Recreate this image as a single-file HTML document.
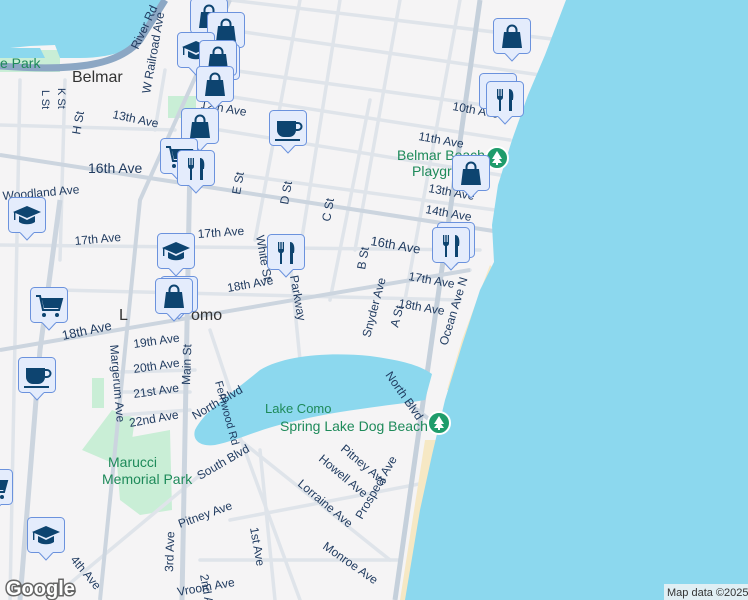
<!DOCTYPE html>
<html><head><meta charset="utf-8"><style>
html,body{margin:0;padding:0}
body{width:748px;height:600px;overflow:hidden;background:#f5f4f5;font-family:"Liberation Sans",sans-serif}
svg{display:block}
.l{font-size:12px;fill:#1f3a5f}
.g{font-size:14px;fill:#1e8a5a}
</style></head><body>
<svg width="748" height="600" viewBox="0 0 748 600" xmlns="http://www.w3.org/2000/svg">
<defs>
<g id="box"><rect x="0.5" y="0.5" width="37" height="35" rx="4" fill="#e4ecfc" stroke="#6b92dd"/><path d="M12 35.5 L19 43 L26 35.5" fill="#e4ecfc" stroke="#6b92dd"/><rect x="12.5" y="33" width="13" height="3" fill="#e4ecfc"/></g>
<g id="bag"><use href="#box"/><path d="M11 14 h16 l2 16 h-20z" fill="#0d4470"/><path d="M14.5 15 v-3 a4.5 4.5 0 0 1 9 0 v3" fill="none" stroke="#0d4470" stroke-width="2"/></g>
<g id="fork"><use href="#box"/><path d="M11 8 v8 a3 3 0 0 0 2 3 v11 h2 v-11 a3 3 0 0 0 2-3 v-8 h-1.3 v7 h-1 v-7 h-1.4 v7 h-1 v-7z" fill="#0d4470"/><path d="M23 8 c4 0 5 5 4 11 h-1 v11 h-3z" fill="#0d4470"/></g>
<g id="cap"><use href="#box"/><path d="M5 15 L19 9 L33 15 L19 21z" fill="#0d4470"/><path d="M11 19 v6 c4 3 12 3 16 0 v-6 l-8 4z" fill="#0d4470"/><rect x="6" y="15" width="1.4" height="8" fill="#0d4470"/></g>
<g id="cart"><use href="#box"/><path d="M6 9 h4 l3 14 h16 l3-11 h-21" fill="none" stroke="#0d4470" stroke-width="2"/><path d="M12 13 h19 l-2 8 h-15z" fill="#0d4470"/><circle cx="14" cy="28" r="2" fill="#0d4470"/><circle cx="27" cy="28" r="2" fill="#0d4470"/></g>
<g id="cup"><use href="#box"/><path d="M8 11 h19 v9 a7 7 0 0 1 -7 7 h-5 a7 7 0 0 1 -7 -7z" fill="#0d4470"/><path d="M27 13 h2 a3 3 0 0 1 0 7 h-2" fill="none" stroke="#0d4470" stroke-width="2"/><rect x="6" y="29" width="25" height="2" fill="#0d4470"/></g>
<g id="tree"><circle cx="0" cy="0" r="11" fill="#1f9c6b" stroke="#fff" stroke-width="2"/><path d="M0 -7 L-5 1 h3 l-3 4 h10 l-3-4 h3z" fill="#fff"/><rect x="-1" y="4" width="2" height="3" fill="#fff"/></g>
</defs>
<rect x="0" y="50" width="60" height="22" fill="#c9eed6"/>
<rect x="168" y="96" width="28" height="22" fill="#c9eed6"/>
<path d="M112 410 L135 418 L130 455 L110 462 L82 450 Z" fill="#c9eed6"/>
<path d="M115 440 L170 430 L172 510 L140 515 L120 500Z" fill="#c9eed6"/>
<rect x="92" y="378" width="12" height="30" fill="#c9eed6"/>
<g stroke="#dfe4ea" stroke-width="3.5" fill="none" stroke-linecap="round">
<path d="M0 155 L500 232"/><path d="M0 245 L480 250"/><path d="M0 350 L470 270"/>
<path d="M230 0 L560 40"/><path d="M230 30 L540 75"/><path d="M230 70 L520 110"/><path d="M220 95 L510 140"/><path d="M220 130 L500 175"/><path d="M240 175 L495 210"/>
<path d="M0 125 L175 130"/><path d="M60 290 L460 300"/><path d="M120 372 L195 370"/><path d="M120 392 L190 392"/><path d="M120 415 L190 410"/>
<path d="M300 0 L255 240"/><path d="M340 0 L300 250"/><path d="M400 0 L355 250"/><path d="M460 0 L405 300"/><path d="M370 100 L330 300"/>
<path d="M20 80 L10 600"/><path d="M65 80 L60 260"/><path d="M165 70 L155 130"/>
<path d="M230 410 L300 600"/><path d="M240 440 L390 560"/><path d="M230 520 L440 480"/><path d="M260 450 L275 600"/><path d="M200 560 L400 560"/>
<path d="M210 330 L240 420"/><path d="M290 260 L300 360"/><path d="M200 475 L50 600"/>
</g>
<g stroke="#ccd5df" stroke-width="4" fill="none">
<path d="M0 155 L500 232"/><path d="M480 0 L395 600" stroke="#c5d0db" stroke-width="5"/>
<path d="M190 160 L182 600" stroke-width="5"/><path d="M230 0 L140 200 L100 600"/>
<path d="M60 200 L40 350 L20 600" stroke-width="5"/>
<path d="M360 365 L430 420"/><path d="M0 350 L470 270"/>
</g>
<path d="M0 0 H165 L150 30 C140 50 110 58 80 58 L60 58 L55 45 L30 46 L10 48 L0 48Z" fill="#8cd8ee"/>
<path d="M0 48 H40 L45 58 H0Z" fill="#8cd8ee"/>
<path d="M490 265 L462 340 L447 390 L455 390 L470 340 L493 268Z" fill="#f6e8c4"/>
<path d="M425 440 L400 600 L420 600 L440 440Z" fill="#f6e8c4"/>
<path d="M566 0 L748 0 L748 600 L405 600 L420 510 L432 455 L445 400 L462 345 L480 290 L494 262 L492 225 L498 185 L512 140 L528 95 L545 55Z" fill="#8cd8ee"/>
<path d="M195 430 C205 410 230 395 260 370 C285 355 330 352 370 356 C400 360 420 365 432 374 L425 400 C395 405 340 410 300 420 C260 428 240 440 215 445 C200 447 192 440 195 430Z" fill="#8cd8ee"/>
<path d="M0 66 C80 72 120 64 140 40 L165 0" stroke="#8ca7c4" stroke-width="7" fill="none"/>
<g class="l">
<text x="72" y="82" font-size="16" fill="#333">Belmar</text>
<text x="88" y="173" font-size="14">16th Ave</text>
<text x="112" y="118" transform="rotate(12 112 118)">13th Ave</text>
<text x="200" y="108" transform="rotate(10 200 108)">12th Ave</text>
<text x="370" y="245" font-size="13" transform="rotate(10 370 245)">16th Ave</text>
<text x="198" y="238" transform="rotate(-4 198 238)">17th Ave</text>
<text x="75" y="245" transform="rotate(-5 75 245)">17th Ave</text>
<text x="408" y="280" transform="rotate(10 408 280)">17th Ave</text>
<text x="398" y="307" transform="rotate(10 398 307)">18th Ave</text>
<text x="228" y="292" transform="rotate(-10 228 292)">18th Ave</text>
<text x="63" y="340" font-size="13" transform="rotate(-12 63 340)">18th Ave</text>
<text x="134" y="348" transform="rotate(-8 134 348)">19th Ave</text>
<text x="134" y="373" transform="rotate(-8 134 373)">20th Ave</text>
<text x="134" y="398" transform="rotate(-8 134 398)">21st Ave</text>
<text x="130" y="427" transform="rotate(-10 130 427)">22nd Ave</text>
<text x="418" y="140" transform="rotate(10 418 140)">11th Ave</text>
<text x="452" y="110" transform="rotate(10 452 110)">10th Ave</text>
<text x="428" y="192" transform="rotate(10 428 192)">13th Ave</text>
<text x="425" y="213" transform="rotate(10 425 213)">14th Ave</text>
<text x="447" y="346" transform="rotate(-73 447 346)">Ocean Ave N</text>
<text x="385" y="375" transform="rotate(55 385 375)">North Blvd</text>
<text x="195" y="420" transform="rotate(-30 195 420)">North Blvd</text>
<text x="200" y="480" transform="rotate(-30 200 480)">South Blvd</text>
<text x="190" y="385" transform="rotate(-88 190 385)">Main St</text>
<text x="215" y="382" transform="rotate(75 215 382)" font-size="11">Fernwood Rd</text>
<text x="150" y="94" transform="rotate(-80 150 94)">W Railroad Ave</text>
<text x="290" y="276" transform="rotate(80 290 276)">Parkway</text>
<text x="256" y="236" transform="rotate(80 256 236)">White St</text>
<text x="370" y="338" transform="rotate(-75 370 338)">Snyder Ave</text>
<text x="398" y="328" transform="rotate(-75 398 328)">A St</text>
<text x="365" y="270" transform="rotate(-80 365 270)">B St</text>
<text x="330" y="222" transform="rotate(-80 330 222)">C St</text>
<text x="288" y="205" transform="rotate(-80 288 205)">D St</text>
<text x="240" y="195" transform="rotate(-80 240 195)">E St</text>
<text x="340" y="450" transform="rotate(40 340 450)">Pitney Ave</text>
<text x="318" y="460" transform="rotate(40 318 460)">Howell Ave</text>
<text x="297" y="485" transform="rotate(40 297 485)">Lorraine Ave</text>
<text x="362" y="520" transform="rotate(-60 362 520)">Prospect Ave</text>
<text x="322" y="548" transform="rotate(35 322 548)">Monroe Ave</text>
<text x="180" y="528" transform="rotate(-20 180 528)">Pitney Ave</text>
<text x="173" y="572" transform="rotate(-88 173 572)">3rd Ave</text>
<text x="200" y="575" transform="rotate(80 200 575)">2nd Ave</text>
<text x="250" y="528" transform="rotate(80 250 528)">1st Ave</text>
<text x="178" y="596" transform="rotate(-10 178 596)">Vroom Ave</text>
<text x="70" y="560" transform="rotate(50 70 560)">4th Ave</text>
<text x="110" y="345" transform="rotate(85 110 345)">Margerum Ave</text>
<text x="138" y="50" transform="rotate(-65 138 50)">River Rd</text>
<text x="3" y="200" transform="rotate(-5 3 200)">Woodland Ave</text>
<text x="42" y="90" transform="rotate(90 42 90)" font-size="11">L St</text>
<text x="58" y="88" transform="rotate(90 58 88)" font-size="11">K St</text>
<text x="80" y="135" transform="rotate(-80 80 135)">H St</text>
<text x="119" y="320" fill="#333" font-size="16">L</text><text x="191" y="320" fill="#333" font-size="16">omo</text>
</g>
<g class="g"><text x="0" y="68" font-size="14">e Park</text><text x="265" y="413" font-size="13">Lake Como</text>
<text x="280" y="431" font-size="14">Spring Lake Dog Beach</text>
<text x="108" y="467" font-size="14">Marucci</text><text x="102" y="484" font-size="14">Memorial Park</text>
<text x="397" y="160" font-size="14">Belmar Beach</text><text x="412" y="176" font-size="14">Playgr</text></g>
<use href="#tree" x="497" y="158"/><use href="#tree" x="439" y="423"/>
<use href="#bag" x="190" y="-2"/><use href="#bag" x="207" y="12"/>
<use href="#cap" x="177" y="32"/><use href="#bag" x="202" y="44"/><use href="#bag" x="199" y="40"/>
<use href="#bag" x="196" y="66"/><use href="#bag" x="181" y="108"/>
<use href="#cart" x="160" y="138"/><use href="#fork" x="177" y="150"/>
<use href="#cup" x="269" y="110"/>
<use href="#bag" x="493" y="18"/><use href="#fork" x="479" y="73"/><use href="#fork" x="486" y="81"/>
<use href="#bag" x="452" y="155"/>
<use href="#fork" x="437" y="222"/><use href="#fork" x="432" y="227"/>
<use href="#fork" x="267" y="234"/><use href="#cap" x="157" y="233"/>
<use href="#bag" x="160" y="276"/><use href="#bag" x="155" y="278"/>
<use href="#cap" x="8" y="197"/><use href="#cart" x="30" y="287"/><use href="#cup" x="18" y="357"/>
<use href="#cart" x="-25" y="469"/><use href="#cap" x="27" y="517"/>
<text x="6" y="595" font-size="20" font-weight="bold" fill="#fff" stroke="#666" stroke-width="3" paint-order="stroke" font-family="Liberation Sans">Google</text>
<rect x="664" y="584" width="84" height="16" fill="#f5f5f5" opacity="0.8"/>
<text x="667" y="596" font-size="11" fill="#333">Map data ©2025</text>
</svg>
</body></html>
